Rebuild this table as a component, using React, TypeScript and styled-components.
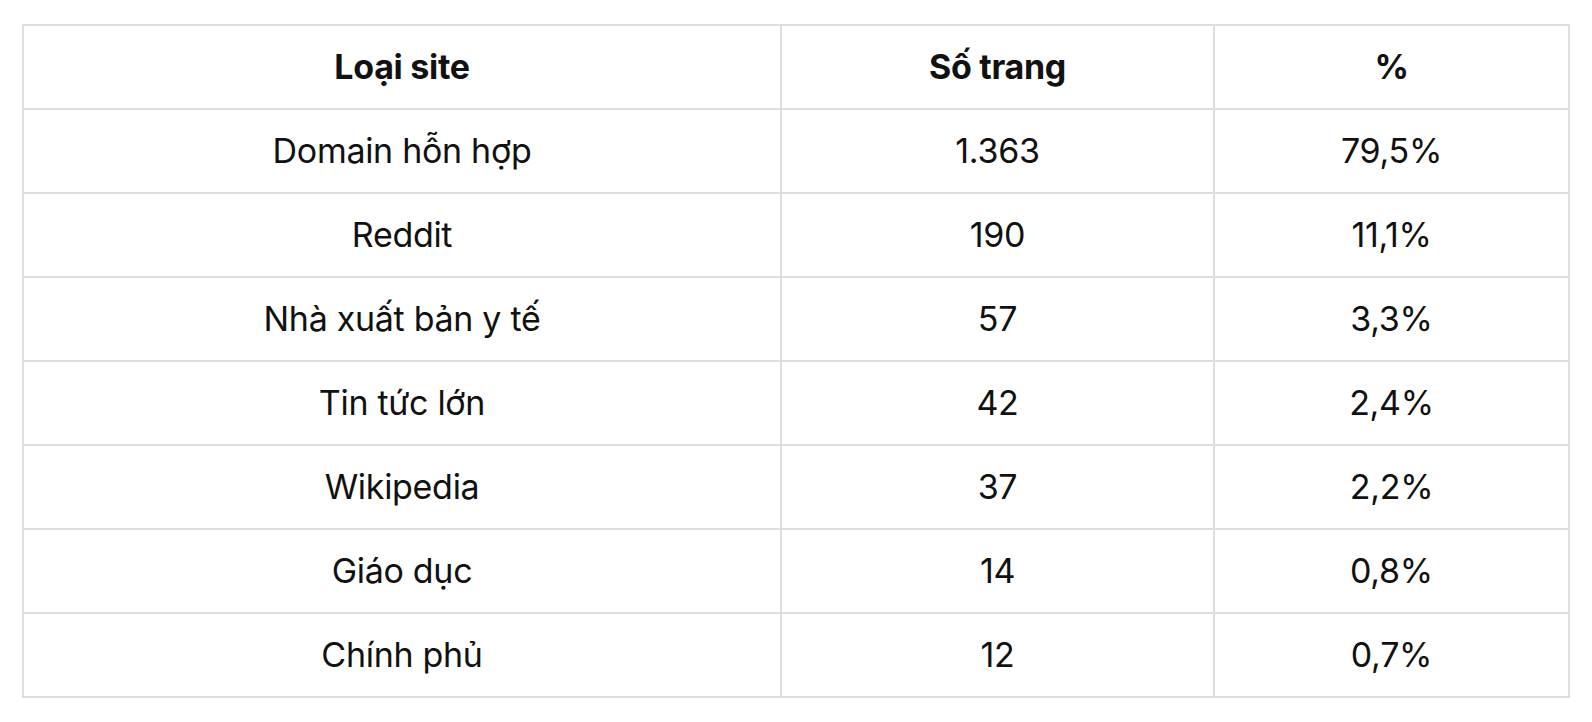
import React from 'react';
import styled, { createGlobalStyle } from 'styled-components';

const GlobalStyle = createGlobalStyle`
  html, body {
    margin: 0;
    padding: 0;
    background: #ffffff;
  }
  body {
    font-family: Inter, "Noto Sans", "Liberation Sans", sans-serif;
    color: #111111;
  }
`;

const Page = styled.div`
  padding: 24px 24px 24px 22px;
`;

const Table = styled.table`
  width: 1546px;
  border-collapse: collapse;
  table-layout: fixed;
  border: 2px solid #dddddd;
`;

const Cell = styled.td<{ $head?: boolean }>`
  height: 82px;
  padding: 0 16px;
  border: 2px solid #dddddd;
  text-align: center;
  vertical-align: middle;
  font-size: 34px;
  line-height: 1.2;
  font-weight: ${({ $head }) => ($head ? 700 : 400)};
  letter-spacing: -0.3px;
  color: #111111;
`;

const rows: [string, string, string][] = [
  ['Domain hỗn hợp', '1.363', '79,5%'],
  ['Reddit', '190', '11,1%'],
  ['Nhà xuất bản y tế', '57', '3,3%'],
  ['Tin tức lớn', '42', '2,4%'],
  ['Wikipedia', '37', '2,2%'],
  ['Giáo dục', '14', '0,8%'],
  ['Chính phủ', '12', '0,7%'],
];

export default function App() {
  return (
    <>
      <GlobalStyle />
      <Page>
        <Table>
          <colgroup>
            <col style={{ width: 758 }} />
            <col style={{ width: 433 }} />
            <col style={{ width: 355 }} />
          </colgroup>
          <thead>
            <tr>
              <Cell as="th" $head>Loại site</Cell>
              <Cell as="th" $head>Số trang</Cell>
              <Cell as="th" $head>%</Cell>
            </tr>
          </thead>
          <tbody>
            {rows.map(([site, pages, pct]) => (
              <tr key={site}>
                <Cell>{site}</Cell>
                <Cell>{pages}</Cell>
                <Cell>{pct}</Cell>
              </tr>
            ))}
          </tbody>
        </Table>
      </Page>
    </>
  );
}
